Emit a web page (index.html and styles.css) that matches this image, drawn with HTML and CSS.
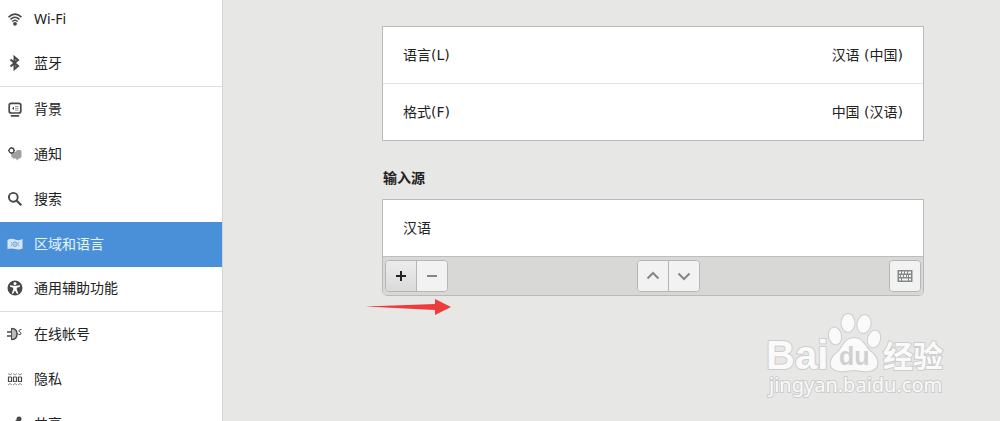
FILE: index.html
```html
<!DOCTYPE html>
<html lang="zh-CN">
<head>
<meta charset="utf-8">
<meta name="viewport" content="width=device-width, initial-scale=1">
<title>区域和语言</title>
<link rel="stylesheet" href="styles.css">
</head>
<body>
<div class="window">
  <nav class="sidebar">
    <a class="item" href="#wifi">
      <svg class="icon" viewBox="0 0 16 16"><g fill="none" stroke="currentColor"><path d="M1.500 6.200Q8 .2 14.500 6.200" stroke-width="1.600"/><path d="M3.500 8.400Q8 4 12.500 8.400" stroke-width="1.500"/><path d="M5.200 10.600Q8 8 10.800 10.600" stroke-width="1.400"/></g><circle cx="8" cy="12.800" r="1.900" fill="currentColor"/></svg>
      Wi-Fi</a>
    <a class="item item-last" href="#bluetooth">
      <svg class="icon" viewBox="0 0 16 16"><path d="M3.500 4.500L11 11 7.500 14V2L11 5 3.500 11.500" fill="none" stroke="currentColor" stroke-width="2"/></svg>
      蓝牙</a>
    <a class="item" href="#background">
      <svg class="icon" viewBox="0 0 16 16"><rect x="2.200" y="2.400" width="11.600" height="9.600" rx="2" fill="none" stroke="currentColor" stroke-width="1.700"/><path d="M4.500 14.800h7" stroke="currentColor" stroke-width="1.800" stroke-linecap="round"/><path d="M5 7.500l2-2v3.500z" fill="currentColor"/><path d="M8 5.500h3.500M8 7.300h3.500M8 9.100h3.500" stroke="currentColor" stroke-width=".8" opacity=".7"/></svg>
      背景</a>
    <a class="item" href="#notifications">
      <svg class="icon" viewBox="0 0 16 16"><path d="M5 5.500q3 2 5-1.500h3q1.500 0 1.500 1.500v5.500l-1.500 1.500h-1l-2 2-1-2H6L4 10z" fill="#a0a0a0"/><circle cx="4.500" cy="4.500" r="2.500" fill="#fff" stroke="currentColor" stroke-width="1.300"/><path d="M4.500 1v1M4.500 7v1M1 4.500h1M7 4.500h1" stroke="currentColor"/></svg>
      通知</a>
    <a class="item" href="#search">
      <svg class="icon" viewBox="0 0 16 16"><circle cx="6.300" cy="6.300" r="4.400" fill="none" stroke="currentColor" stroke-width="1.900"/><path d="M9.500 9.500l4.800 4.800" stroke="currentColor" stroke-width="2.200"/></svg>
      搜索</a>
    <a class="item item-selected" href="#region" aria-current="page">
      <svg class="icon" viewBox="0 0 16 16"><path d="M.5 4Q4 2 8 3.500T15.500 3v9.500Q12 14 8 13T.5 13z" fill="#d4e7fa"/><circle cx="8" cy="8.200" r="2.200" fill="none" stroke="#6799cb"/><path d="M4 5.500l1 2-1 3M12 5.500l-1 2 1 3" fill="none" stroke="#83afdb" stroke-width=".8"/><circle cx="8" cy="8.200" r=".7" fill="#6799cb"/></svg>
      区域和语言</a>
    <a class="item item-last" href="#access">
      <svg class="icon" viewBox="0 0 16 16"><circle cx="8" cy="8" r="7.500" fill="currentColor"/><circle cx="8" cy="3.400" r="1.500" fill="#fff"/><path d="M3 5.200l3.500.5h3L13 5.200v1.500L9.800 7.800v2l1.500 3.500-1.200.6L8 10.500l-2.100 3.400-1.200-.6 1.500-3.500v-2L3 6.700z" fill="#fff"/></svg>
      通用辅助功能</a>
    <a class="item" href="#accounts">
      <svg class="icon" viewBox="0 0 16 16"><g fill="none" stroke="currentColor"><path d="M0 6h4M0 10h4" stroke-width="1.500"/><path d="M4.800 2v12" stroke-width="1.500"/><path d="M5 2.500q5 .2 5 5.500t-5 5.500" fill="#bbb" stroke-width="1.400"/><path d="M10 8h1.500M14.500 3.500q-2.500 0-2.500 1.200t1.200 1.400q1.400.5.500 2.200l-2 .5"/></g></svg>
      在线帐号</a>
    <a class="item" href="#privacy">
      <svg class="icon" viewBox="0 0 16 16"><g fill="none" stroke="currentColor"><path d="M1 2.500l2 1.500 2-1.500M6 2.500l2 1.500 2-1.500M11 2.500l2 1.500 2-1.500M1 14l2-1.500L5 14M6 14l2-1.500 2 1.500M11 14l2-1.500 2 1.500" stroke-width=".9" opacity=".7"/><path d="M1.500 6v5M4.500 6v5M6.500 6v5M9.500 6v5M11.500 6v5M14.500 6v5" stroke-width="1.200"/><path d="M1 6h3.500M1 10.500h3.500M6 6h3.500M6 10.500h3.500M11 6h3.500M11 10.500h3.500" stroke-width=".9"/></g></svg>
      隐私</a>
    <a class="item" href="#sharing">
      <svg class="icon" viewBox="0 0 16 16"><path d="M12 3.500L4 8l8 4.500" fill="none" stroke="currentColor" stroke-width="1.500"/><circle cx="12" cy="3" r="2.500" fill="currentColor"/><circle cx="4" cy="8" r="2.500" fill="currentColor"/><circle cx="12" cy="13" r="2.500" fill="currentColor"/></svg>
      共享</a>
  </nav>

  <main class="content">
    <section class="card">
      <button class="row" type="button"><span>语言(L)</span><span>汉语 (中国)</span></button>
      <button class="row" type="button"><span>格式(F)</span><span>中国 (汉语)</span></button>
    </section>

    <h2 class="title">输入源</h2>
    <section class="card card-sources">
      <button class="row" type="button">汉语</button>
      <div class="toolbar">
        <div class="group">
          <button class="tool tool-active" type="button" aria-label="添加"><svg class="icon" viewBox="0 0 16 16"><path d="M3 8h10M8 3v10" stroke="currentColor" stroke-width="2"/></svg></button>
          <button class="tool" type="button" aria-label="移除"><svg class="icon" viewBox="0 0 16 16"><path d="M3 8h10" stroke="currentColor" stroke-width="1.800"/></svg></button>
        </div>
        <div class="group">
          <button class="tool" type="button" aria-label="上移"><svg class="icon" viewBox="0 0 16 16"><path d="M2.500 10.500L8 5l5.500 5.500" fill="none" stroke="currentColor" stroke-width="2"/></svg></button>
          <button class="tool" type="button" aria-label="下移"><svg class="icon" viewBox="0 0 16 16"><path d="M2.500 5.500L8 11l5.500-5.500" fill="none" stroke="currentColor" stroke-width="2"/></svg></button>
        </div>
        <div class="group">
          <button class="tool" type="button" aria-label="键盘布局"><svg class="icon" viewBox="0 0 16 16"><rect x=".5" y="2" width="15" height="12" fill="#858886"/><path d="M2 4.500h2m1 0h2m1 0h2m1 0h3M2 8h1m1 0h2m1 0h2m1 0h1m1 0h2M2 11.500h2m1 0h6m1 0h2" stroke="#f5f5f5" stroke-width="2"/></svg></button>
        </div>
      </div>
    </section>
  </main>

  <svg class="arrow" viewBox="0 0 86 16" aria-hidden="true"><path d="M0 7.500L70 5V0l16 8-16 8v-5z" fill="#ee3c3c"/></svg>

  <svg class="watermark" viewBox="0 0 206 90" role="img" aria-label="Baidu 经验">
    <g class="mark">
      <ellipse cx="88" cy="26" rx="6" ry="8.500" transform="rotate(-12 88 26)"/>
      <ellipse cx="101" cy="13" rx="6.500" ry="9"/>
      <ellipse cx="117" cy="14" rx="6.500" ry="9" transform="rotate(12 117 14)"/>
      <ellipse cx="127" cy="29" rx="6" ry="8.500" transform="rotate(15 127 29)"/>
      <path d="M107 28c-9 0-11 9-16 14-8 5-12 18 2 19 5 1 8-1 14-1s9 2 14 1c14-1 10-14 3-19-6-5-8-14-17-14z"/>
      <text class="mark-brand" x="19" y="59">Bai</text>
      <text class="mark-cjk" x="136" y="57">经验</text>
      <text class="mark-site" x="22" y="82">jingyan.baidu.com</text>
    </g>
    <text class="mark-du" x="92" y="55">du</text>
  </svg>
</div>
</body>
</html>
```
FILE: styles.css
```css
* {
  box-sizing: border-box;
}

body {
  margin: 0;
  font-family: "Noto Sans", "Noto Sans CJK SC", sans-serif;
  font-size: 14px;
  line-height: 20px;
  color: #222;
  background: #e7e7e6;
}

.window {
  position: relative;
  display: flex;
  height: 100vh;
  overflow: hidden;
}

.sidebar {
  flex: 0 0 223px;
  margin-top: -3px;
  background: #fff;
  border-right: 1px solid #d4d4d4;
}

.item {
  display: flex;
  align-items: center;
  gap: 11px;
  height: 45px;
  padding: 0 8px 2px 7px;
  color: #222;
  text-decoration: none;
}

.item .icon {
  color: #484848;
}

.item-last {
  border-bottom: 1px solid #dedede;
}

.item-selected {
  color: #e4f4f8;
  background: #4a90d9;
}

.icon {
  flex: none;
  display: block;
  width: 16px;
  height: 16px;
}

.content {
  flex: 1;
  padding: 26px 76px 26px 159px;
}

.card {
  background: #fff;
  border: 1px solid #bababa;
}

.card-sources {
  border-radius: 0 0 5px 5px;
  overflow: hidden;
}

.row {
  display: flex;
  justify-content: space-between;
  align-items: center;
  width: 100%;
  height: 56px;
  padding: 0 20px;
  border: 0;
  font-family: "DejaVu Sans", "Noto Sans CJK SC", sans-serif;
  font-size: 14px;
  line-height: 20px;
  color: inherit;
  background: none;
}

.row + .row {
  height: 57px;
  border-top: 1px solid #e2e2e2;
}

.title {
  margin: 27px 0 11px 1px;
  font-size: 14px;
  font-weight: 700;
  line-height: 20px;
}

.toolbar {
  display: flex;
  justify-content: space-between;
  padding: 3px 2px;
  border-top: 1px solid #bebebe;
  background: #d8d8d7;
}

.group {
  display: flex;
  border: 1px solid #b5b5b5;
  border-radius: 4px;
  overflow: hidden;
}

.tool {
  display: grid;
  place-items: center;
  width: 30px;
  height: 30px;
  padding: 0;
  border: 0;
  color: #868686;
  background: #f2f2f2;
}

.tool + .tool {
  width: 31px;
  border-left: 1px solid #b5b5b5;
}

.tool-active {
  color: #222;
  background: linear-gradient(#ececec, #dadada);
}

.arrow {
  position: absolute;
  left: 365px;
  top: 299px;
  width: 86px;
  height: 16px;
}

.watermark {
  position: absolute;
  right: 47px;
  bottom: 21px;
  width: 206px;
  height: 90px;
}

.mark {
  fill: #fafafa;
  stroke: #cdcdcd;
  stroke-width: 2px;
  paint-order: stroke;
}

.mark-brand {
  font: 700 40px "Liberation Sans", sans-serif;
}

.mark-cjk {
  font: 700 30px "Noto Sans CJK SC", sans-serif;
}

.mark-site {
  font: 400 20px "Noto Sans", sans-serif;
}

.mark-du {
  font: 700 25px "Liberation Sans", sans-serif;
  fill: #d0d0d0;
}
```
